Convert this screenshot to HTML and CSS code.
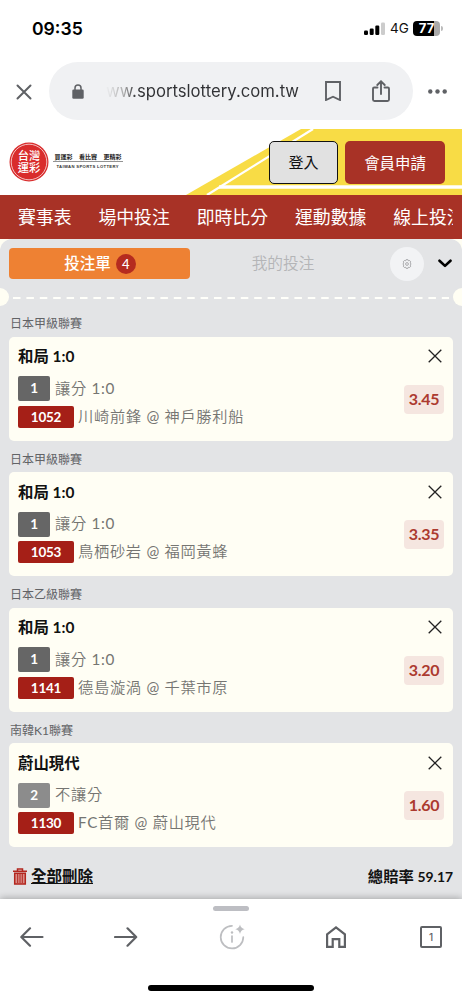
FILE: index.html
```html
<!DOCTYPE html>
<html lang="zh-Hant">
<head>
<meta charset="utf-8">
<meta name="viewport" content="width=device-width, initial-scale=1">
<title>台灣運彩</title>
<link rel="stylesheet" href="styles.css">
</head>
<body>
<div class="phone">
  <header class="status">
    <span class="time">09:35</span>
    <div class="status-right">
      <svg class="signal" width="21" height="13" viewBox="0 0 21 13"><rect x="0" y="8.500" width="4" height="4.500" rx="1.200"/><rect x="5.700" y="6.500" width="4" height="6.500" rx="1.200"/><rect x="11.300" y="3.500" width="4" height="9.500" rx="1.200"/><rect x="17" y="0.500" width="4" height="12.500" rx="1.200" fill="#ccc"/></svg>
      <span class="net">4G</span>
      <span class="battery">77</span>
      <span class="battery-tip"></span>
    </div>
  </header>

  <div class="address">
    <svg class="close" width="16" height="16" viewBox="0 0 16 16"><path d="M1.500 1.500l13 13M14.500 1.500l-13 13"/></svg>
    <div class="url-pill">
      <svg class="lock" width="12" height="15" viewBox="0 0 12 15"><path d="M3 6V4a3 3 0 0 1 6 0v2" fill="none" stroke="#5f6165" stroke-width="1.500"/><rect x="0.300" y="5.500" width="11.400" height="9.200" rx="1.300" fill="#5f6165"/></svg>
      <span class="url">ww.sportslottery.com.tw</span>
      <svg class="bookmark" width="16" height="20" viewBox="0 0 16 20"><path d="M1 1h14v18l-7-3.300L1 19z"/></svg>
      <svg class="share" width="18" height="22" viewBox="0 0 18 22"><path d="M5.500 7.500H2.200A1.200 1.200 0 0 0 1 8.700v10.800a1.500 1.500 0 0 0 1.500 1.500h13a1.500 1.500 0 0 0 1.500-1.500V8.700a1.200 1.200 0 0 0-1.200-1.200H12.500M9 14V1.500M5.300 5L9 1.300 12.700 5"/></svg>
    </div>
    <svg class="more" width="19" height="5" viewBox="0 0 19 5"><circle cx="2.300" cy="2.500" r="2.200"/><circle cx="9.500" cy="2.500" r="2.200"/><circle cx="16.700" cy="2.500" r="2.200"/></svg>
  </div>

  <div class="banner">
    <svg class="banner-bg" width="462" height="66" viewBox="0 0 462 66"><path d="M186 66L301 0H462V66z" fill="#f8dc45"/><path d="M207 66L313 0" fill="none" stroke="#fff" stroke-width="2.300"/><path d="M219 58H462" fill="none" stroke="#fff" stroke-width="3.300"/></svg>
    <div class="logo">
      <svg class="seal" width="40" height="40" viewBox="0 0 40 40"><circle cx="20" cy="20" r="19.500" fill="#d92c2c"/><circle cx="20" cy="20" r="17.800" fill="none" stroke="#fff" stroke-width=".7"/><text x="20" y="18.300" text-anchor="middle">台灣</text><text x="20" y="29.800" text-anchor="middle">運彩</text></svg>
      <div class="tag">
        <svg width="70" height="19" viewBox="0 0 70 19"><text x="1.500" y="6.600" class="tag-zh">買運彩</text><text x="26" y="6.600" class="tag-zh">看比賽</text><text x="50.500" y="6.600" class="tag-zh">更精彩</text><path d="M0 9.500h70" stroke="#777" stroke-width=".8"/><text x="3.500" y="15.900" class="tag-en" textLength="62">TAIWAN SPORTS LOTTERY</text></svg>
      </div>
    </div>
    <div class="auth">
      <button class="login">登入</button>
      <button class="apply">會員申請</button>
    </div>
  </div>

  <nav class="nav"><div class="nav-scroll"><a>賽事表</a><a>場中投注</a><a>即時比分</a><a>運動數據</a><a>線上投注</a></div></nav>

  <main class="slip-wrap">
    <div class="slip">
      <div class="tabs">
        <div class="tab-active"><span class="tab-label">投注單</span><span class="count">4</span></div>
        <div class="tab">我的投注</div>
        <div class="gear"><svg width="10" height="10" viewBox="0 0 10 10" fill="none" stroke="#8e8e90"><circle cx="5" cy="5" r="1.400" stroke-width=".7"/><path d="M4 .7h2l.4 1.100 1.200-.3 1.200 1.400-.6 1 .9 1.100-.9 1.100.6 1-1.200 1.400-1.200-.3L6 9.300H4l-.4-1.100-1.200.3-1.200-1.400.6-1L.9 5l.9-1.100-.6-1 1.200-1.400 1.200.3z" stroke-width=".7"/></svg></div>
        <svg class="chev" width="14" height="9" viewBox="0 0 14 9"><path d="M1.500 1.700L7 6.900l5.500-5.200"/></svg>
      </div>
      <div class="tear"><i class="notch"></i><svg class="dashes" width="436" height="3" viewBox="0 0 436 3"><path d="M0 2h436"/></svg><i class="notch"></i></div>

      <section class="bet">
        <h2>日本甲級聯賽</h2>
        <div class="card">
          <div class="info"><div class="pick">和局 1:0</div><div class="row"><b class="no">1</b><span>讓分 1:0</span></div><div class="row game"><b class="id">1052</b><span>川崎前鋒 @ 神戶勝利船</span></div></div>
          <div class="side"><svg class="x" width="14" height="14" viewBox="0 0 14 14"><path d="M.7.7l12.600 12.600M13.300.7L.7 13.300"/></svg><span class="odds">3.45</span></div>
        </div>
      </section>
      <section class="bet">
        <h2>日本甲級聯賽</h2>
        <div class="card">
          <div class="info"><div class="pick">和局 1:0</div><div class="row"><b class="no">1</b><span>讓分 1:0</span></div><div class="row game"><b class="id">1053</b><span>鳥栖砂岩 @ 福岡黃蜂</span></div></div>
          <div class="side"><svg class="x" width="14" height="14" viewBox="0 0 14 14"><path d="M.7.7l12.600 12.600M13.300.7L.7 13.300"/></svg><span class="odds">3.35</span></div>
        </div>
      </section>
      <section class="bet">
        <h2>日本乙級聯賽</h2>
        <div class="card">
          <div class="info"><div class="pick">和局 1:0</div><div class="row"><b class="no">1</b><span>讓分 1:0</span></div><div class="row game"><b class="id">1141</b><span>德島漩渦 @ 千葉市原</span></div></div>
          <div class="side"><svg class="x" width="14" height="14" viewBox="0 0 14 14"><path d="M.7.7l12.600 12.600M13.300.7L.7 13.300"/></svg><span class="odds">3.20</span></div>
        </div>
      </section>
      <section class="bet">
        <h2>南韓K1聯賽</h2>
        <div class="card">
          <div class="info"><div class="pick">蔚山現代</div><div class="row"><b class="no away">2</b><span>不讓分</span></div><div class="row game"><b class="id">1130</b><span>FC首爾 @ 蔚山現代</span></div></div>
          <div class="side"><svg class="x" width="14" height="14" viewBox="0 0 14 14"><path d="M.7.7l12.600 12.600M13.300.7L.7 13.300"/></svg><span class="odds">1.60</span></div>
        </div>
      </section>

      <div class="summary">
        <div class="clear"><svg width="14" height="17" viewBox="0 0 14 17" fill="none" stroke="#b3261e"><path d="M0 3.300h14M4.500 3V1h5v2" stroke-width="1.500"/><path d="M1.700 5.200v10.900h10.600V5.200z" stroke-width="1.500" fill="#d98d88"/><path d="M4.700 6v9M7 6v9M9.300 6v9" stroke-width="1"/></svg><a>全部刪除</a></div>
        <div class="total">總賠率 <span>59.17</span></div>
      </div>
    </div>
  </main>

  <footer class="toolbar">
    <div class="grip"></div>
    <div class="tools">
      <svg class="back" width="24" height="20" viewBox="0 0 24 20"><path d="M22.500 10H1.500M10 1.300L1.300 10l8.700 8.700"/></svg>
      <svg class="forward" width="24" height="20" viewBox="0 0 24 20"><path d="M1 10h21M13.500 1.300l8.700 8.700-8.700 8.700"/></svg>
      <svg class="info-icon" width="26" height="26" viewBox="0 0 26 26"><path d="M13 1.800A11.300 11.300 0 1 0 24.300 13M13 12v6"/><circle cx="13" cy="8.500" r="1.200"/><path class="spark" d="M21 .5q.7 3.800 4.700 4.700-4 .8-4.700 4.700-.8-3.900-4.700-4.700Q20.200 4.300 21 .5z"/></svg>
      <svg class="home" width="20" height="22" viewBox="0 0 20 22"><path d="M1.100 8.300L10 1.400l8.900 6.900V20.900h-5.600v-7.700H6.700v7.700H1.100z"/></svg>
      <span class="tab-count">1</span>
    </div>
    <div class="home-bar"></div>
  </footer>
</div>
</body>
</html>
```
FILE: styles.css
```css
* { box-sizing: border-box; }
body { margin: 0; background: #fff; font-family: Lato, "Noto Sans CJK TC", sans-serif; color: #111; }
svg { display: block; flex: none; }
.phone { width: 462px; height: 1000px; overflow: hidden; display: flex; flex-direction: column; }

.status { height: 62px; flex: none; display: flex; align-items: center; justify-content: space-between; padding: 0 19px 6px 32px; font-family: Inter, sans-serif; }
.time { font-size: 17.600px; font-weight: 600; color: #000; }
.status-right { display: flex; align-items: center; }
.net { font-size: 13.500px; margin-left: 5px; width: 18px; color: #111; white-space: nowrap; }
.battery { width: 27px; height: 15px; margin-left: 5px; border-radius: 4px; background: linear-gradient(90deg, #000 77%, #aaa 77%); color: #fff; font-size: 13px; font-weight: 700; line-height: 15px; text-align: center; }
.battery-tip { width: 2px; height: 5px; background: #bbb; border-radius: 0 2px 2px 0; margin-left: 1px; }

.address { height: 67px; flex: none; display: flex; align-items: flex-start; padding-left: 16px; }
.close { margin: 22px 17px 0 0; fill: none; stroke: #5f6165; stroke-width: 2; stroke-linecap: round; }
.url-pill { width: 364px; height: 58px; border-radius: 29px; background: #f0f1f3; display: flex; align-items: center; padding-left: 23px; }
.lock { margin-right: 22px; }
.url { width: 194px; font: 16.700px/24px Inter, sans-serif; white-space: nowrap; background: linear-gradient(90deg, #eeeff1 0, #aaa 18px, #303134 30px); background-clip: text; -webkit-background-clip: text; color: transparent; }
.bookmark, .share { fill: none; stroke: #5f6165; stroke-width: 1.900; }
.bookmark { margin-left: 24.500px; }
.share { margin-left: 31.500px; stroke-linecap: round; }
.more { margin: 27px 0 0 15px; fill: #5f6165; }

.banner { height: 66px; flex: none; position: relative; display: flex; justify-content: space-between; padding: 12px 17px 0 9px; }
.banner-bg { position: absolute; inset: 0; }
.logo, .auth { position: relative; display: flex; }
.seal { margin-top: 1px; }
.seal text { font: 500 11.300px "Noto Sans CJK TC", sans-serif; fill: #fff; }
.tag { margin: 11px 0 0 4px; }
.tag-zh { font: 700 6px "Noto Sans CJK TC", sans-serif; fill: #222; }
.tag-en { font: 700 4.200px "Liberation Sans", sans-serif; fill: #333; }
.auth { gap: 7px; }
.auth button { height: 43px; border-radius: 5px; font: 15.400px "Noto Sans CJK TC", sans-serif; padding: 0 0 2px; }
.auth .login { width: 69px; background: #e1e1e1; border: 1px solid #111; color: #111; font-size: 15px; }
.apply { width: 100px; background: #a83226; border: 0; color: #fff; }

.nav { height: 44px; flex: none; background: #a83226; padding: 0 9px 0 18px; }
.nav-scroll { height: 44px; overflow: hidden; display: flex; gap: 26.900px; white-space: nowrap; color: #fff; font: 17.850px/42px "Noto Sans CJK TC", sans-serif; }

.slip-wrap { height: 660px; flex: none; background: #fffef3; }
.slip { height: 660px; background: #e3e4e6; border-radius: 12px 12px 0 0; }
.tabs { height: 50px; display: flex; align-items: center; padding: 0 9px 1px 9px; }
.tab-active { width: 181px; height: 31px; border-radius: 4px; background: #ee8133; color: #fff; display: flex; align-items: center; justify-content: center; gap: 5px; padding-left: 1px; font-size: 15.500px; font-weight: 500; }
.tab-label { padding-bottom: 3px; }
.count { width: 20px; height: 20px; border-radius: 50%; background: #b52b1f; font-size: 13px; line-height: 20px; text-align: center; }
.tab { width: 186px; padding-bottom: 2px; text-align: center; font: 15.700px "Noto Sans CJK TC DemiLight", "Noto Sans CJK TC", sans-serif; color: #b4b5b7; }
.gear { width: 34px; height: 34px; border-radius: 50%; background: #f2f3f5; margin-left: 14px; display: flex; align-items: center; justify-content: center; }
.chev { margin-left: 14px; fill: none; stroke: #000; stroke-width: 2.600; stroke-linecap: round; stroke-linejoin: round; }
.tear { height: 18px; margin: -1px -9px 0; display: flex; align-items: center; justify-content: space-between; }
.notch { width: 18px; height: 18px; border-radius: 50%; background: #fffef3; }
.dashes path { stroke: #fffffa; stroke-width: 2; stroke-dasharray: 7.500 5.900; }

.bet { padding: 0 9px; height: 135.500px; }
.bet h2 { margin: 0; height: 30.500px; padding: 9px 0 0 1px; font-size: 12px; line-height: 18px; font-weight: 400; color: #626366; }
.card { height: 104px; background: #fffef4; border-radius: 5px; padding: 8.500px 9px; display: flex; justify-content: space-between; }
.pick { font-size: 15.400px; line-height: 22px; height: 31px; font-weight: 700; color: #111; }
.row { height: 25px; display: flex; align-items: center; gap: 5px; font-family: Lato, "Noto Sans CJK TC DemiLight", "Noto Sans CJK TC", sans-serif; font-size: 15.250px; letter-spacing: .7px; color: #757572; white-space: pre; }
.row span { padding-bottom: 4px; }
.game { margin-top: 3px; gap: 4px; }
.row b { border-radius: 2px; color: #fff; font-size: 13.500px; font-weight: 700; letter-spacing: -.25px; text-align: center; }
.no { width: 32px; height: 25px; line-height: 25px; background: #666; }
.no.away { background: #8c8c8c; }
.id { width: 56px; height: 22px; line-height: 22px; background: #a51f17; }
.side { display: flex; flex-direction: column; align-items: flex-end; }
.x { margin: 4px 2px 0 0; fill: none; stroke: #222; stroke-width: 1.300; }
.odds { width: 40px; height: 29px; margin-top: 21.500px; border-radius: 4px; background: #f5e6e0; color: #ac3a2f; font-size: 16px; font-weight: 700; letter-spacing: -.3px; line-height: 28px; text-align: center; }

.summary { display: flex; justify-content: space-between; align-items: center; height: 28px; margin-top: 14px; padding: 0 9px 0 13px; font-weight: 700; }
.clear { display: flex; align-items: center; gap: 4px; }
.clear a { font-size: 15.500px; line-height: 24px; text-decoration: underline; }
.total { font-size: 15.300px; padding-bottom: 2px; }
.total span { font-size: 13.900px; }

.toolbar { height: 101px; flex: none; background: #fff; box-shadow: 0 -1px 7px rgba(0,0,0,.28); position: relative; display: flex; flex-direction: column; align-items: center; padding-top: 7px; }
.grip { width: 36px; height: 5px; border-radius: 3px; background: #bdbec3; }
.tools { width: 422px; height: 52px; display: flex; align-items: center; }
.tools svg { fill: none; stroke: #5f6165; stroke-width: 2.200; stroke-linecap: round; stroke-linejoin: round; }
.forward { margin: 0 81px 0 70px; }
.tools .info-icon { stroke: #bdbec1; stroke-width: 1.700; }
.tools .info-icon circle, .tools .spark { fill: #bdbec1; stroke: none; }
.tools .home { margin: 0 74px 0 81px; stroke-linecap: butt; stroke-linejoin: miter; }
.tab-count { width: 22px; height: 22px; border: 2px solid #5f6165; border-radius: 2px; font: 500 10px/18px Inter, sans-serif; text-align: center; color: #5f6165; }
.home-bar { width: 166px; height: 6px; border-radius: 3px; background: #000; margin-top: 22px; }
```
